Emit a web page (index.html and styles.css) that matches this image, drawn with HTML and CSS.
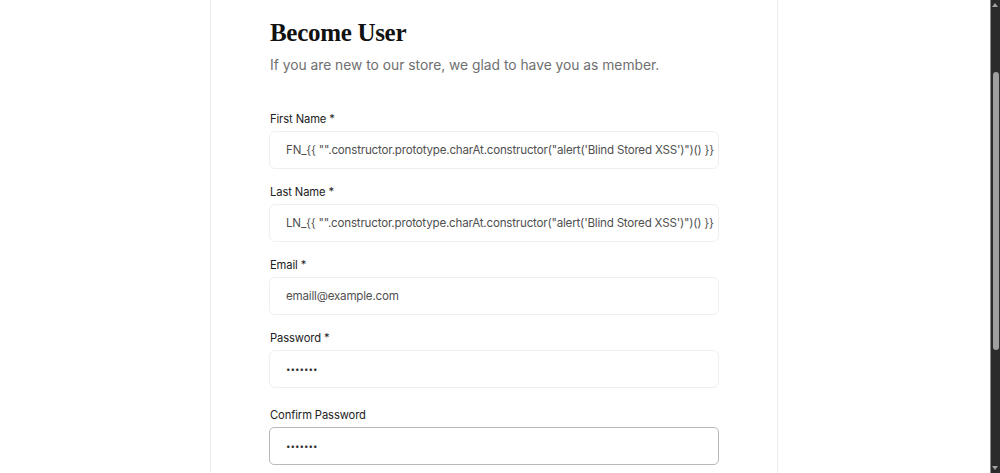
FILE: index.html
```html
<!DOCTYPE html>
<html lang="en">
<head>
<meta charset="utf-8">
<title>Become User</title>
<link rel="stylesheet" href="styles.css">
</head>
<body>
<div class="page">
  <main class="card">
    <h1 class="title">Become User</h1>
    <p class="subtitle">If you are new to our store, we glad to have you as member.</p>
    <form class="form">
      <div class="field">
        <label class="label">First Name *</label>
        <div class="input">FN_{{ "".constructor.prototype.charAt.constructor("alert('Blind Stored XSS')")() }}</div>
      </div>
      <div class="field">
        <label class="label">Last Name *</label>
        <div class="input">LN_{{ "".constructor.prototype.charAt.constructor("alert('Blind Stored XSS')")() }}</div>
      </div>
      <div class="field">
        <label class="label">Email *</label>
        <div class="input">emaill@example.com</div>
      </div>
      <div class="field">
        <label class="label">Password *</label>
        <div class="input dots">•••••••</div>
      </div>
      <div class="field field-confirm">
        <label class="label">Confirm Password</label>
        <div class="input dots focused">•••••••</div>
      </div>
    </form>
  </main>
</div>
<div class="scrollbar">
  <span class="arrow up"></span>
  <span class="thumb"></span>
  <span class="arrow down"></span>
</div>
</body>
</html>
```

FILE: styles.css
```css
* { box-sizing: border-box; }
html, body { margin: 0; padding: 0; background: #fff; }
body {
  font-family: "Inter", "Open Sans", sans-serif;
  color: #222;
  height: 473px;
  overflow: hidden;
}
.page {
  display: flex;
  padding-left: 210px;
}
.card {
  width: 568px;
  min-height: 520px;
  border-left: 1px solid #ececec;
  border-right: 1px solid #ececec;
  padding: 18px 58px 0 58px;
}
.title {
  margin: 0 0 0 1px;
  font-family: "Liberation Serif", serif;
  font-weight: 700;
  font-size: 25px;
  letter-spacing: -0.3px;
  color: #111;
  line-height: 30px;
}
.subtitle {
  margin: 6px 0 0 1px;
  font-size: 13.8px;
  color: #6f6f6f;
  line-height: 22px;
}
.form {
  display: flex;
  flex-direction: column;
  margin-top: 34px;
}
.field { display: flex; flex-direction: column; }
.field + .field { margin-top: 14px; }
.field-confirm { margin-top: 18px !important; }
.label {
  font-size: 11.2px;
  letter-spacing: -0.1px;
  line-height: 18px;
  color: #222;
  margin: 0 0 3px 1px;
}
.input {
  height: 38px;
  border: 1px solid #efefef;
  border-radius: 6px;
  padding: 0 16px;
  display: flex;
  align-items: center;
  font-size: 11.6px;
  letter-spacing: -0.2px;
  color: #505050;
  white-space: nowrap;
  overflow: hidden;
}
.dots { font-size: 8px; letter-spacing: 0; color: #333; }
.focused { border-color: #b9b9b9; border-radius: 5px; }
.scrollbar {
  position: fixed;
  top: 0;
  right: 0;
  width: 10px;
  height: 473px;
  background: #2b2b2b;
  border-left: 1px solid #8a8a8a;
}
.thumb {
  position: absolute;
  left: 2px;
  top: 72px;
  width: 6px;
  height: 278px;
  border-radius: 3px;
  background: #9f9f9f;
}
.arrow {
  position: absolute;
  left: 1px;
  width: 0;
  height: 0;
  border-left: 3.5px solid transparent;
  border-right: 3.5px solid transparent;
}
.arrow.up { top: 3px; border-bottom: 4px solid #a3a3a3; }
.arrow.down { bottom: 3px; border-top: 4px solid #a3a3a3; }
```
